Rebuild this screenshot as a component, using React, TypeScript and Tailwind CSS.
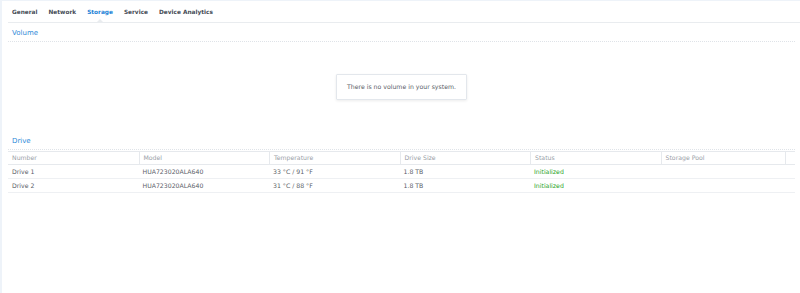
import React from "react";

// Storage tab of a device settings page
const tabs = ["General", "Network", "Storage", "Service", "Device Analytics"];

const columns = ["Number", "Model", "Temperature", "Drive Size", "Status", "Storage Pool"];

const drives = [
  { number: "Drive 1", model: "HUA723020ALA640", temp: "33 °C / 91 °F", size: "1.8 TB", status: "Initialized", pool: "" },
  { number: "Drive 2", model: "HUA723020ALA640", temp: "31 °C / 88 °F", size: "1.8 TB", status: "Initialized", pool: "" },
];

const SectionTitle = ({ label }: { label: string }) => {
  return (
    <div className="h-[19px] flex items-end pb-[4px] pl-[4px] border-b border-dotted border-[#dfe3e8]">
      <span className="text-[7px] leading-[8px] text-[#2f8ad8]">{label}</span>
    </div>
  );
};

const App = () => {
  return (
    <div className="w-[800px] h-[293px] overflow-hidden bg-white border-l-2 border-t border-[#eef3f9] font-['DejaVu_Sans',sans-serif]">
      {/* Tabs */}
      <div className="ml-[6px] h-[22px] pl-[4px] flex items-center gap-[11px] border-b border-[#e9ecef]">
        {tabs.map((t) => (
          <span
            key={t}
            className={`text-[5.8px] font-bold leading-[8px] ${t === "Storage" ? "text-[#1a7fd6] relative" : "text-[#444b55]"}`}
          >
            {t}
            {t === "Storage" && (
              <span className="absolute left-1/2 -translate-x-1/2 top-[11px] w-0 h-0 border-x-[3px] border-x-transparent border-b-[3px] border-b-[#e9ecef]" />
            )}
          </span>
        ))}
      </div>

      <div className="ml-[6px] mr-[5px]">
        {/* Volume */}
        <SectionTitle label="Volume" />
        <div className="h-[89px] flex items-center justify-center">
          <div className="w-[131px] h-[26px] flex items-center justify-center border border-[#e3e7ec] rounded-[1px] shadow-[0_1px_3px_rgba(0,0,0,0.08)]">
            <span className="text-[6.2px] text-[#5a6068]">There is no volume in your system.</span>
          </div>
        </div>

        {/* Drive */}
        <SectionTitle label="Drive" />
        <div className="mt-[1px]">
          <div className="flex h-[14px] border-y border-[#e6e9ed]">
            {columns.map((c, i) => (
              <div
                key={c}
                className={`${i === 5 ? "w-[125px] border-r" : "w-[130.5px]"} flex items-center pl-[4px] text-[6.2px] text-[#9aa0a7] ${i > 0 ? "border-l" : ""} border-[#e6e9ed]`}
              >
                {c}
              </div>
            ))}
            <div className="flex-1" />
          </div>
          {drives.map((d) => (
            <div key={d.number} className="flex h-[14px] border-b border-[#eef0f3] text-[6.2px] text-[#5a6068]">
              <div className="w-[130.5px] flex items-center pl-[4px]">{d.number}</div>
              <div className="w-[130.5px] flex items-center pl-[4px]">{d.model}</div>
              <div className="w-[130.5px] flex items-center pl-[4px]">{d.temp}</div>
              <div className="w-[130.5px] flex items-center pl-[4px]">{d.size}</div>
              <div className="w-[130.5px] flex items-center pl-[4px] text-[#2aa52a]">{d.status}</div>
              <div className="w-[125px] flex items-center pl-[4px]">{d.pool}</div>
              <div className="flex-1" />
            </div>
          ))}
        </div>
      </div>
    </div>
  );
};

export default App;
